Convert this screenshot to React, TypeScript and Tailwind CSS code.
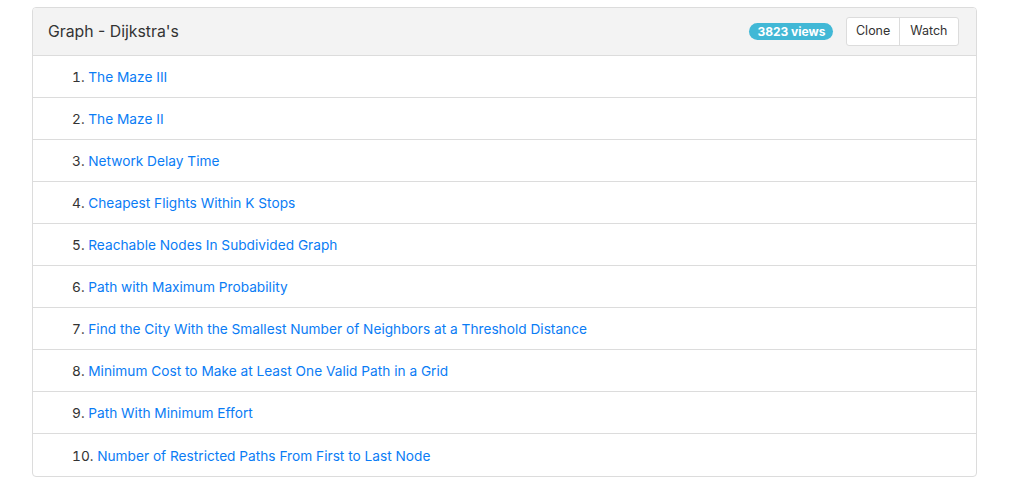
import React from "react";

const items = [
  "The Maze III",
  "The Maze II",
  "Network Delay Time",
  "Cheapest Flights Within K Stops",
  "Reachable Nodes In Subdivided Graph",
  "Path with Maximum Probability",
  "Find the City With the Smallest Number of Neighbors at a Threshold Distance",
  "Minimum Cost to Make at Least One Valid Path in a Grid",
  "Path With Minimum Effort",
  "Number of Restricted Paths From First to Last Node",
];

export default function App() {
  return (
    <div
      className="w-[1020px] h-[484px] bg-white pt-[7px] pl-[32px]"
      style={{ fontFamily: 'Inter, "Liberation Sans", Arial, sans-serif' }}
    >
      <div className="w-[945px] border border-[#dcdcdc] rounded-[4px] overflow-hidden">
        <div className="h-[48px] bg-[#f3f3f3] border-b border-[#dcdcdc] flex items-center pl-[15px] pr-[17px]">
          <div className="text-[15.8px] text-[#333]">Graph - Dijkstra's</div>
          <div className="ml-auto flex items-center">
            <span className="h-[17px] px-[8px] rounded-full bg-[#41b8d6] text-white text-[12px] font-bold flex items-center leading-none">
              3823 views
            </span>
            <div className="ml-[13px] flex h-[29px] border border-[#dcdcdc] rounded-[3px] bg-white text-[12.5px] text-[#333]">
              <div className="px-[8.5px] flex items-center border-r border-[#dcdcdc]">Clone</div>
              <div className="px-[10.5px] flex items-center">Watch</div>
            </div>
          </div>
        </div>
        {items.map((t, i) => (
          <div
            key={i}
            className={`h-[42px] flex items-center pl-[39px] pt-[2px] text-[13.7px] ${i < items.length - 1 ? "border-b border-[#dcdcdc]" : ""}`}
          >
            <span className="text-[#333] tabular-nums">{i + 1}.&nbsp;</span>
            <span className="text-[#0a7cf5]">{t}</span>
          </div>
        ))}
      </div>
    </div>
  );
}
